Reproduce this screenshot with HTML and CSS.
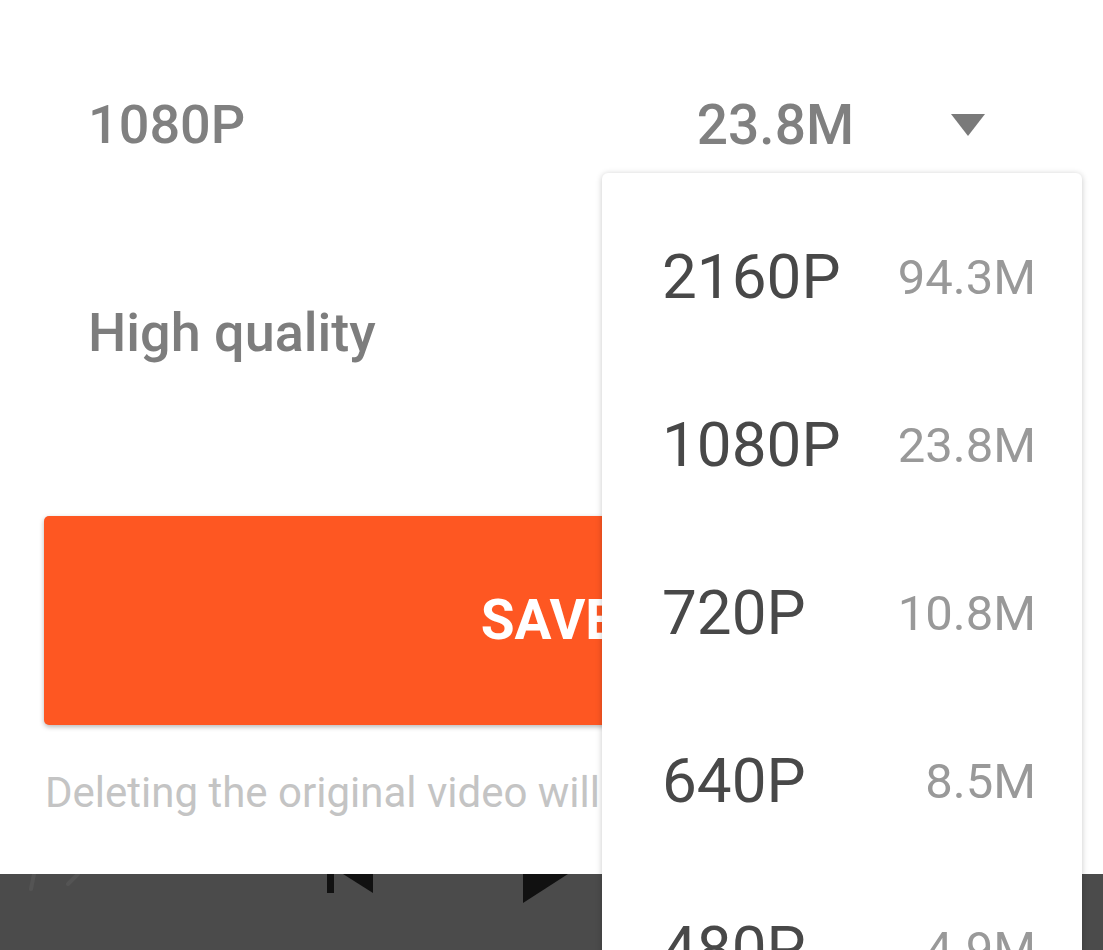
FILE: index.html
```html
<!DOCTYPE html>
<html>
<head>
<meta charset="utf-8">
<link rel="stylesheet" href="styles.css">
</head>
<body>
<div class="screen">
  <div class="sheet">
    <div class="row row-res">
      <span class="row-label">1080P</span>
      <span class="row-size">23.8M</span>
      <svg class="caret" width="34" height="22" viewBox="0 0 34 22"><polygon points="0,0 34,0 17,22" fill="#7a7a7a"/></svg>
    </div>
    <div class="row row-quality">
      <span class="row-label">High quality</span>
    </div>
    <button class="save-btn">SAVE</button>
    <p class="note">Deleting the original video will free up space</p>
  </div>
  <div class="player-bar">
    <svg class="player-icons" width="1103" height="76" viewBox="0 0 1103 76">
      <line x1="34" y1="0" x2="31" y2="15" stroke="#545454" stroke-width="4" stroke-linecap="round"/>
      <line x1="78" y1="0" x2="68" y2="10" stroke="#545454" stroke-width="4" stroke-linecap="round"/>
      <rect x="327" y="0" width="7" height="19" fill="#111"/>
      <polygon points="343,0 373,0 373,19" fill="#111"/>
      <polygon points="523,0 568,0 523,29" fill="#111"/>
    </svg>
  </div>
  <div class="dropdown">
    <div class="dd-item"><span class="dd-res">2160P</span><span class="dd-size">94.3M</span></div>
    <div class="dd-item"><span class="dd-res">1080P</span><span class="dd-size">23.8M</span></div>
    <div class="dd-item"><span class="dd-res">720P</span><span class="dd-size">10.8M</span></div>
    <div class="dd-item"><span class="dd-res">640P</span><span class="dd-size">8.5M</span></div>
    <div class="dd-item"><span class="dd-res">480P</span><span class="dd-size">4.9M</span></div>
  </div>
</div>
</body>
</html>
```

FILE: styles.css
```css
html, body {
  margin: 0;
  padding: 0;
  background: #ffffff;
}
body {
  font-family: Roboto, "Noto Sans", "Liberation Sans", sans-serif;
  overflow: hidden;
}
.screen {
  position: relative;
  width: 1103px;
  height: 950px;
  overflow: hidden;
}
.sheet {
  height: 874px;
  box-sizing: border-box;
  padding: 60px 44px 0 44px;
  background: #ffffff;
  overflow: hidden;
}
.row {
  display: flex;
  align-items: center;
  height: 130px;
  padding: 0 74px 0 44px;
  color: #808080;
  font-weight: 500;
}
.row-label {
  flex: 1;
  font-size: 54px;
  line-height: 1;
}
.row-size {
  font-size: 55px;
  line-height: 1;
  margin-right: 97px;
}
.caret {
  display: block;
}
.row-quality {
  margin-top: 78px;
  color: #7d7d7d;
}
.row-quality .row-label {
  font-size: 54px;
}
.save-btn {
  display: block;
  width: 100%;
  height: 209px;
  margin-top: 118px;
  border: none;
  border-radius: 5px;
  background: #fe5722;
  color: #ffffff;
  font-family: Roboto, "Noto Sans", "Liberation Sans", sans-serif;
  font-weight: 700;
  font-size: 55px;
  line-height: 1;
  box-shadow: 0 2px 5px rgba(0, 0, 0, 0.28);
  padding: 0 6px 0 0;
}
.note {
  margin: 43px 0 0 1px;
  font-size: 42px;
  line-height: 50px;
  color: #c4c4c4;
  white-space: nowrap;
}
.player-bar {
  height: 76px;
  background: #4b4b4b;
  overflow: hidden;
}
.player-icons {
  display: block;
}
.dropdown {
  position: absolute;
  top: 173px;
  left: 602px;
  width: 480px;
  height: 900px;
  box-sizing: border-box;
  padding-top: 20px;
  background: #ffffff;
  border-radius: 6px;
  box-shadow: 0 1px 6px rgba(0, 0, 0, 0.22);
}
.dd-item {
  display: flex;
  align-items: center;
  justify-content: space-between;
  height: 168px;
  padding: 0 46px 0 60px;
}
.dd-res {
  font-size: 62px;
  line-height: 1;
  color: #484848;
}
.dd-size {
  font-size: 49px;
  line-height: 1;
  color: #999999;
}
```
